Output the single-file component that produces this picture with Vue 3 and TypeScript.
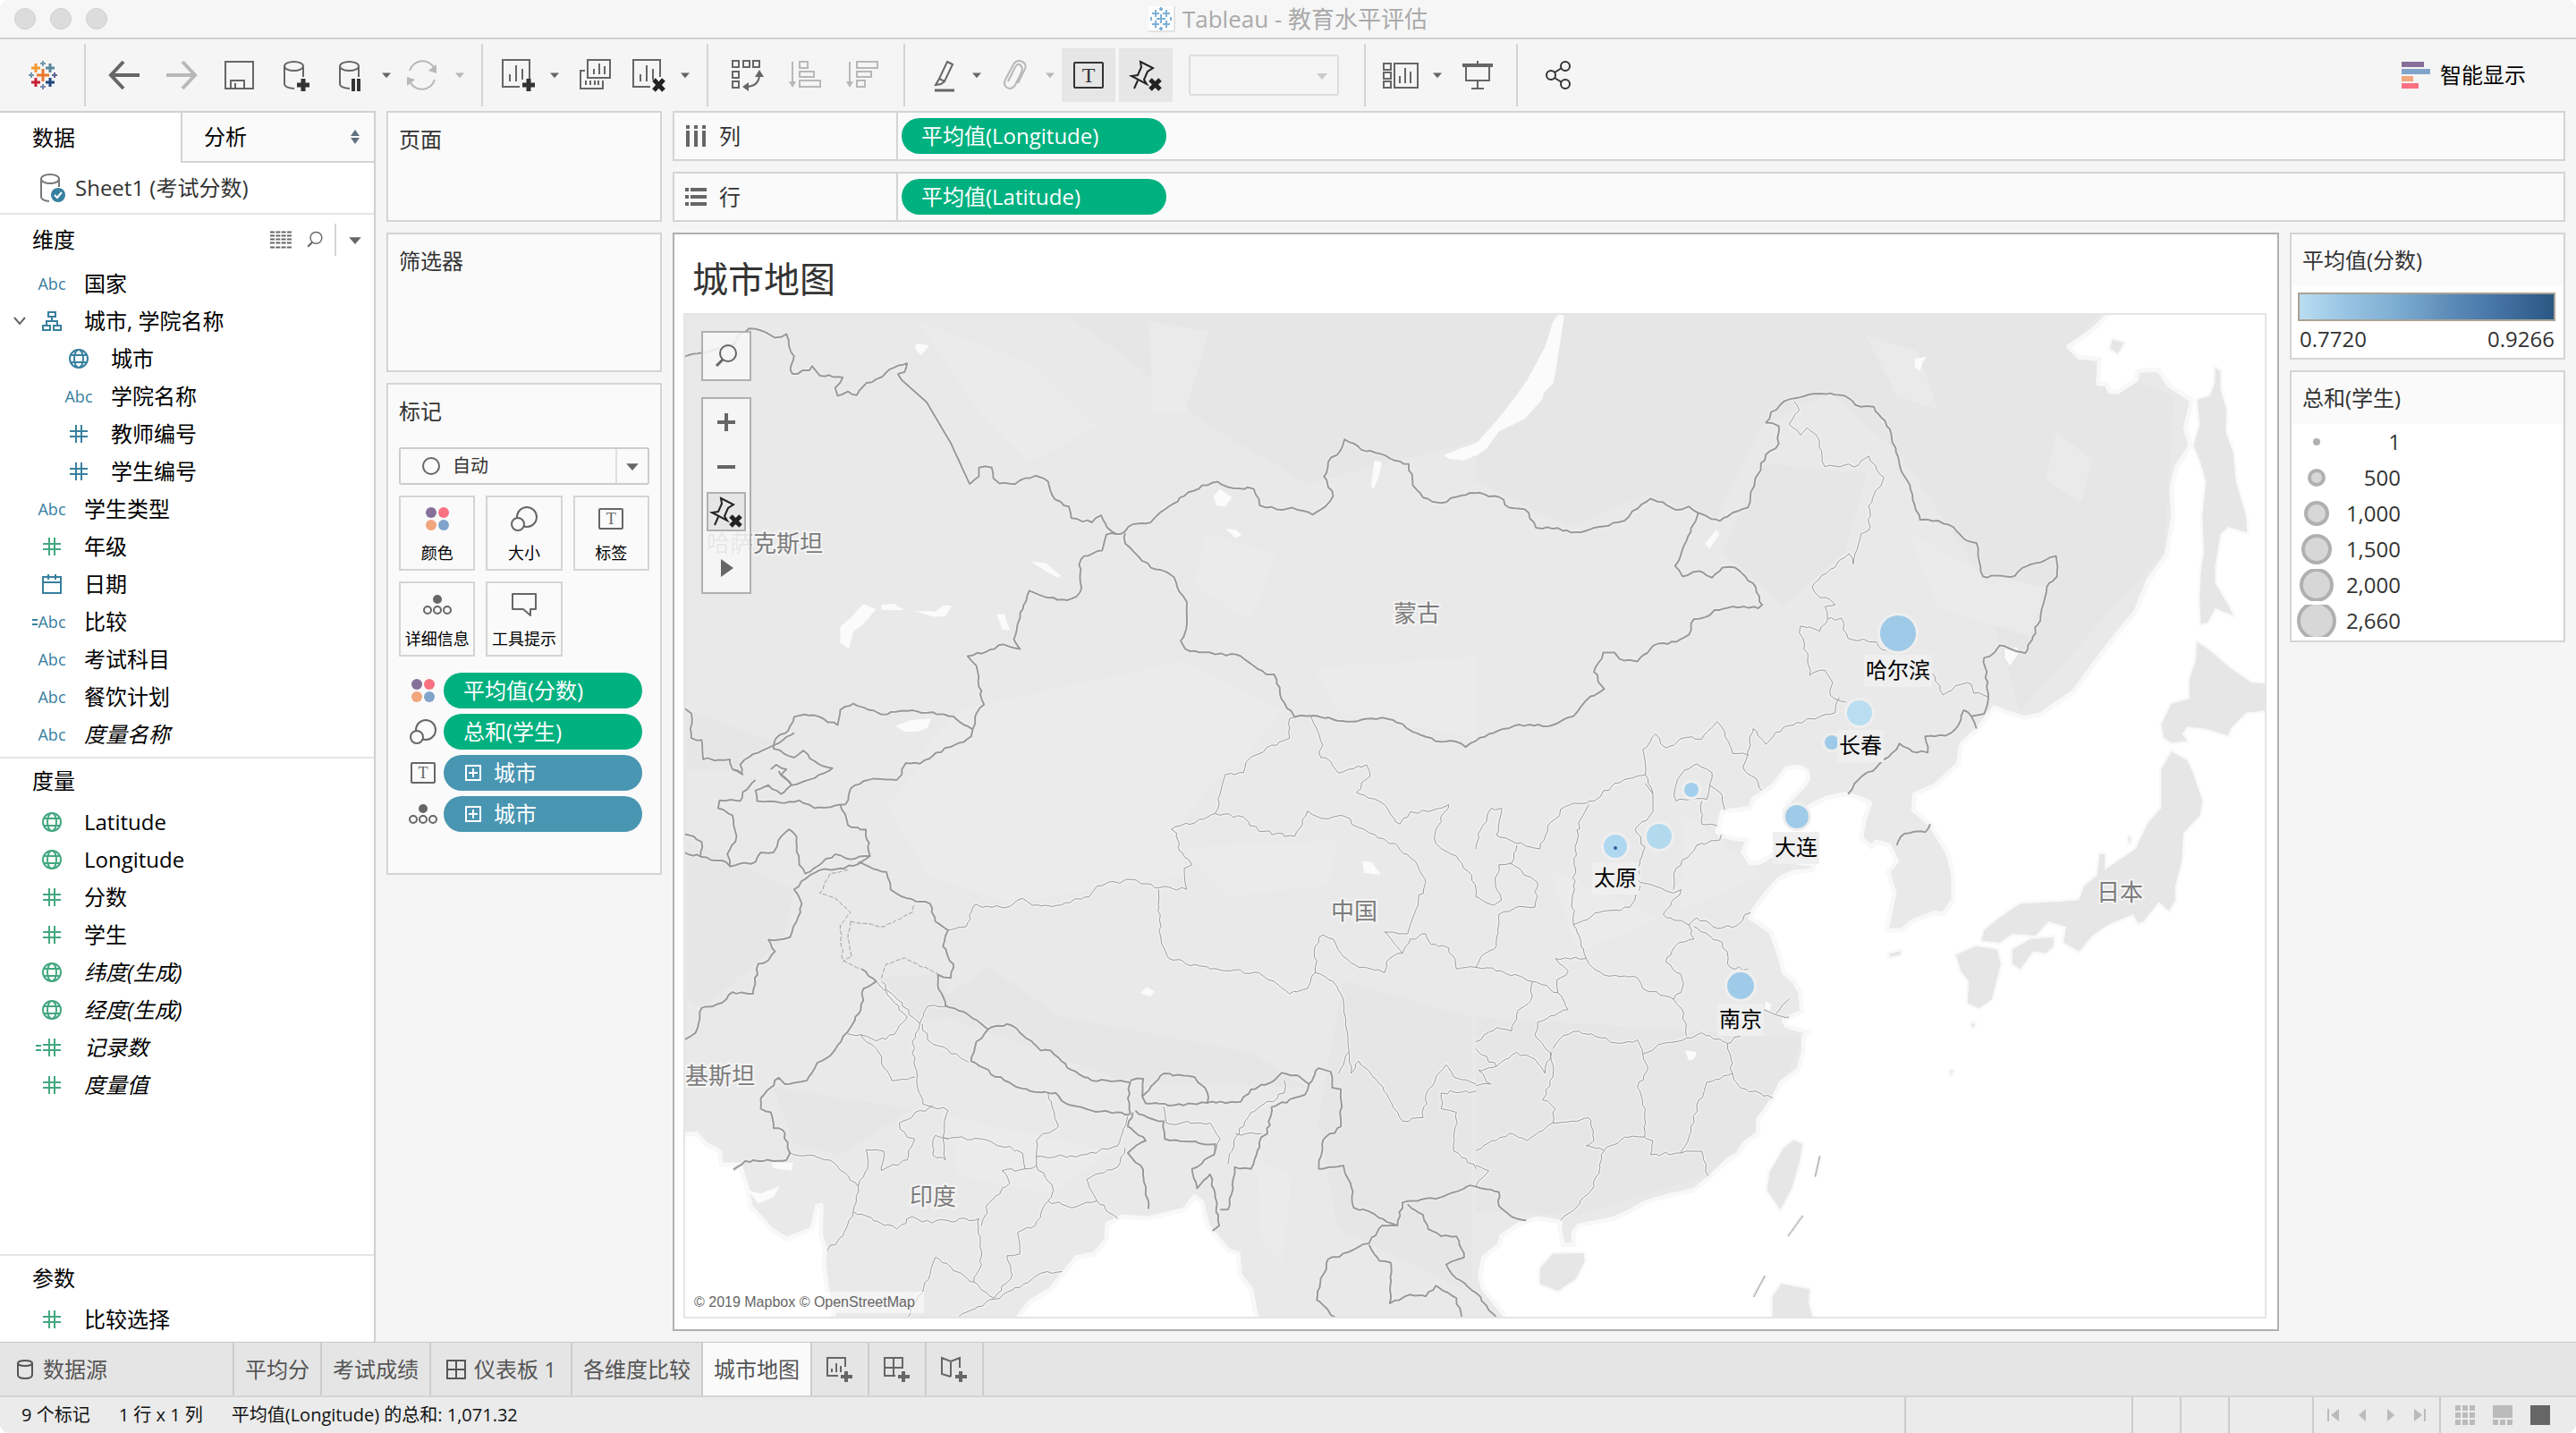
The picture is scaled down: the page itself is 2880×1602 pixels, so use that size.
<script setup lang="ts">
import { ref } from 'vue'

interface Field {
  icon: string
  name: string
  tone?: 'green'
  nested?: boolean
  open?: boolean
  calc?: boolean
  generated?: boolean
}

const dimensions: Field[] = [
  { icon: 'abc', name: '国家' },
  { icon: 'tree', name: '城市, 学院名称', open: true },
  { icon: 'globe', name: '城市', nested: true },
  { icon: 'abc', name: '学院名称', nested: true },
  { icon: 'hash', name: '教师编号', nested: true },
  { icon: 'hash', name: '学生编号', nested: true },
  { icon: 'abc', name: '学生类型' },
  { icon: 'hash', name: '年级', tone: 'green' },
  { icon: 'calendar', name: '日期' },
  { icon: 'abc', name: '比较', calc: true },
  { icon: 'abc', name: '考试科目' },
  { icon: 'abc', name: '餐饮计划' },
  { icon: 'abc', name: '度量名称', generated: true },
]
const measures: Field[] = [
  { icon: 'globe', name: 'Latitude', tone: 'green' },
  { icon: 'globe', name: 'Longitude', tone: 'green' },
  { icon: 'hash', name: '分数', tone: 'green' },
  { icon: 'hash', name: '学生', tone: 'green' },
  { icon: 'globe', name: '纬度(生成)', tone: 'green', generated: true },
  { icon: 'globe', name: '经度(生成)', tone: 'green', generated: true },
  { icon: 'hash', name: '记录数', tone: 'green', calc: true, generated: true },
  { icon: 'hash', name: '度量值', tone: 'green', generated: true },
]
const parameters: Field[] = [{ icon: 'hash', name: '比较选择', tone: 'green' }]
const panes = [
  { title: '维度', cls: 'dims', fields: dimensions },
  { title: '度量', cls: 'meas', fields: measures },
  { title: '参数', cls: 'params', fields: parameters },
]

const markButtons = [
  { icon: 'color', label: '颜色' },
  { icon: 'size', label: '大小' },
  { icon: 'label', label: '标签' },
  { icon: 'detail', label: '详细信息' },
  { icon: 'tooltip', label: '工具提示' },
]
const markPills = [
  { icon: 'color', label: '平均值(分数)', discrete: false },
  { icon: 'size', label: '总和(学生)', discrete: false },
  { icon: 'label', label: '城市', discrete: true },
  { icon: 'detail', label: '城市', discrete: true },
]
const sizes = [
  { label: '1', r: 4 },
  { label: '500', r: 8 },
  { label: '1,000', r: 12 },
  { label: '1,500', r: 15 },
  { label: '2,000', r: 17 },
  { label: '2,660', r: 20 },
]
const sheetTabs = ['平均分', '考试成绩', '仪表板 1', '各维度比较', '城市地图']
const activeSheet = ref('城市地图')
const markType = ref('自动')

/* Map geometry. Points are stored per survey tile (A–D) and projected onto the canvas. */
const tiles: Record<string, [number, number]> = { A: [750, 240], B: [1650, 340], C: [750, 860], D: [1650, 860] }
type Pt = [number, number]

function parse(src: string): Pt[] {
  let tile = tiles.A
  return src.trim().split(/\s+/).map((token) => {
    let t = token
    if (tiles[t[0]]) {
      tile = tiles[t[0]]
      t = t.slice(1)
    }
    const [x, y] = t.split(',').map(Number)
    return [tile[0] + x / 1.742, tile[1] + y / 2.529] as Pt
  })
}

let seed = 7
function noise(): number {
  seed = (seed * 16807) % 2147483647
  return seed / 2147483647 - 0.5
}

function line(src: string, amp: number): string {
  const pts = parse(src)
  const out: string[] = []
  pts.forEach((p, i) => {
    if (i > 0) {
      const q = pts[i - 1]
      const n = Math.floor(Math.hypot(p[0] - q[0], p[1] - q[1]) / 5)
      for (let k = 1; k < n; k++) {
        out.push(`${(q[0] + ((p[0] - q[0]) * k) / n + noise() * amp).toFixed(1)} ${(q[1] + ((p[1] - q[1]) * k) / n + noise() * amp).toFixed(1)}`)
      }
    }
    out.push(`${p[0].toFixed(1)} ${p[1].toFixed(1)}`)
  })
  return 'M' + out.join('L')
}

const area = (src: string) => line(src, 0) + 'Z'

const seas = [
  'B1235,20 1215,55 1195,80 1155,120 1175,150 1215,155 1212,225 1228,225 1235,248 1250,248 1285,215 1290,188 1330,185 1350,230 1395,272 1382,350 1392,400 1365,460 1355,520 1358,600 1345,710 1310,780 1285,870 1250,930 1205,1015 1165,1095 1100,1160 1070,1170 1035,1155 1010,1140 975,1205 945,1245 940,1300 895,1360 855,1385 852,1430 885,1470 D920,240 930,300 930,370 910,410 895,405 850,430 830,455 800,455 815,350 803,290 820,260 805,215 780,205 770,220 750,195 757,140 768,95 745,80 720,70 685,80 650,105 625,150 605,140 600,115 613,85 640,45 B648,1340 645,1320 630,1308 605,1312 580,1360 540,1400 535,1425 480,1435 470,1490 D475,185 500,195 530,200 520,235 535,265 550,265 580,240 620,262 660,270 655,285 620,290 590,310 560,360 540,400 535,420 575,460 590,520 600,575 620,600 632,630 635,685 600,710 605,725 650,745 638,755 638,800 628,850 595,885 575,940 550,990 550,1030 525,1055 510,1090 490,1105 455,1155 425,1190 375,1205 330,1225 300,1250 270,1270 200,1290 190,1310 192,1345 170,1345 163,1300 165,1280 120,1270 85,1285 50,1320 45,1345 15,1380 8,1430 15,1470 35,1505 65,1560 1560,1560 B1560,20',
  'C670,1560 700,1505 740,1470 790,1380 825,1370 848,1330 850,1285 880,1265 930,1270 1000,1245 1020,1208 1035,1225 1045,1290 1085,1360 1105,1370 1108,1430 1130,1470 1142,1560',
  'C10,1035 50,1030 68,1060 95,1080 98,1118 135,1118 140,1145 150,1190 155,1235 195,1300 225,1328 275,1300 285,1235 293,1232 292,1320 300,1350 298,1400 305,1480 320,1560 10,1560',
].map(area)

const islands = [
  'B1440,180 1450,190 1450,240 1462,300 1460,360 1475,420 1480,500 1500,600 1502,645 1465,630 1450,650 1440,740 1440,790 1465,850 1475,880 1440,860 1425,900 1412,905 1410,830 1412,760 1418,700 1415,600 1422,500 1410,440 1398,400 1410,340 1405,270 1430,260 1440,220',
  'B1405,955 1430,980 1470,1030 1510,1070 1560,1075 1560,1145 1500,1155 1470,1200 1465,1220 1420,1200 1385,1195 1375,1215 1385,1235 1355,1240 1340,1225 1335,1190 1355,1130 1390,1115 1390,1060 1402,1010',
  'B1355,1265 1385,1290 D1395,5 1415,90 1410,130 1378,180 1375,260 1362,330 1362,370 1350,400 1330,375 1300,430 1290,435 1280,410 1230,440 1200,470 1175,515 1145,490 1150,445 1115,430 1090,470 1045,465 1020,490 985,485 990,455 1020,420 1060,380 1130,375 1175,370 1185,330 1210,300 1215,240 1225,240 1225,285 1285,225 1310,150 1335,110 1335,0',
  'D1045,510 1080,480 1125,475 1125,500 1110,520 1085,515 1060,565 1045,550',
  'D935,525 975,500 1015,510 1022,550 1005,650 980,675 958,660 960,600 945,570',
  'D620,1048 636,1060 630,1110 615,1185 593,1245 567,1190 572,1140 600,1070',
  'D150,1370 210,1368 212,1390 195,1440 160,1475 125,1455 125,1410',
  'D595,1455 630,1465 650,1470 648,1510 658,1560 578,1560 578,1490',
  'D805,522 828,514 826,524 806,530',
  'D1270,190 1276,195 1274,212',
  'B1240,100 1262,110 1250,140 1235,125',
  'D966,718 972,720 970,728 966,727',
  'D924,853 930,852 925,864',
].map(area)

const lakes = [
  'B165,20 172,35 155,195 150,225 132,250 130,268 95,325 45,360 20,410 0,430 0,395 40,330 65,285 100,215 135,120 150,50',
  'A1505,680 1530,665 1575,642 1575,675 1545,695 1515,690',
  'A477,365 503,370 487,398 477,380', 'A375,1100 400,1115 380,1150 355,1180 347,1228 330,1210 330,1165 350,1140',
  'A410,1103 435,1100 455,1118 410,1118', 'A477,1120 515,1122 530,1105 548,1105 535,1135 510,1137',
  'A635,1130 650,1130 660,1175 645,1172', 'A700,980 730,985 760,1020 755,1027 735,1012',
  'A1070,775 1093,800 1080,825 1062,822 1057,795', 'A1370,695 1385,700 1378,745 1368,778 1364,765',
  'A1080,888 1100,890 1112,905 1100,914', 'A437,1445 465,1430 507,1424 500,1450 480,1462 455,1462',
  'C1347,260 1365,262 1383,298 1350,293', 'C927,616 942,628 935,644 914,632', 'B468,638 475,650 455,692 446,678',
  'B855,155 878,148 870,165 865,190 855,180', 'B1030,975 1055,970 1058,985 1040,1022 1030,1000',
  'D407,795 430,800 425,820 415,823', 'D565,655 575,665 572,685 562,680', 'C150,1190 175,1200 212,1178 200,1210 170,1228',
  'C195,1112 238,1112 236,1135 200,1128',
].map(area)

const reliefDark = [
  'A0,270 760,270 900,420 1050,600 1240,760 1568,640 1568,270', 'B0,0 1230,0 1150,130 1360,260 1340,700 1060,1150 980,760 830,430 690,250 560,340 470,600 330,540 180,630 0,500',
  'C30,200 240,340 220,480 60,680 30,640', 'C500,680 880,880 1240,900 1130,800 760,700 620,560', 'D0,700 640,760 560,1000 450,1150 200,1260 0,1250',
  'C1310,600 1560,700 1560,1480 1300,1300 1260,1000', 'B560,450 760,480 720,700 600,850 480,700', 'C200,900 470,960 330,1090 240,1060',
  'C410,590 520,580 560,690 480,720', 'A30,1400 200,1490 130,1568 30,1568',
].map(area)
const reliefLight = [
  'A480,300 700,420 830,600 700,700 600,560', 'A1040,900 1180,960 1130,1150 1020,1050', 'A560,1400 1000,1260 1190,1400 1100,1568 460,1568',
  'C480,0 1080,0 990,160 1000,300 660,380 500,300 420,100', 'A1250,1280 1568,1250 1568,1480 1300,1410', 'C1000,220 1300,200 1280,330 1080,360',
  'B840,640 980,760 1110,800 1080,940 900,860', 'D400,120 560,300 400,400', 'C540,980 860,1080 740,1200 560,1150', 'D140,280 360,420 200,520',
  'B760,90 860,130 900,300 820,260', 'B1130,360 1200,440 1180,560 1110,500', 'C1140,1100 1210,1150 1190,1400 1150,1330', 'A930,300 1050,330 1000,560 940,560',
].map(area)

const nations = [
  'A26,402 60,390 100,378 125,365 130,345 152,322 185,333 203,348 225,337 230,370 240,400 233,440 237,450 270,440 275,428 290,455 335,460 330,475 320,490 325,512 345,500 362,510 375,485 400,465 420,445 435,432 460,420 455,445 442,450',
  'A582,762 600,740 600,715 625,715 628,745 640,760 670,762 690,745 710,738 735,755 748,805 775,825 780,858 820,870 838,850 850,885 868,903 885,895 900,875 935,870 955,840 1000,795 1035,765 1065,755 1085,770 1135,775 1147,822 1180,833 1210,828 1250,848 1275,825 1290,795 1272,740 1280,700 1305,665 1312,635 1345,665 1380,675 1410,695 1437,705 1445,765 1465,800 1500,815 1530,798 B0,534 45,545 65,575 95,580 117,632 150,635 205,645 240,630 290,612 305,585 340,550 365,560 390,582 415,572 433,590 475,613 500,590 530,575 535,540 550,480 565,425 590,395 590,345 565,335 575,305 600,275 640,260 690,252 725,265 750,290 775,290 797,330 810,380 822,430 828,470 845,510 855,570 865,610 900,612 930,630 955,668 975,675 978,710 988,770 1050,768 1065,745 1100,730 1130,712 1132,770 1112,800 1100,880 1085,940 1070,987 1020,965 1010,985 990,1000 998,1100 990,1158 965,1165 975,1200',
  'B965,1165 950,1148 940,1190 915,1220 875,1222 880,1268 850,1265 825,1242 810,1270 780,1310 745,1345 725,1385',
  'D820,215 828,190 845,180 875,178 885,155',
  'A885,900 885,930 910,965 935,998 965,1010 980,1025 990,1065 1005,1095 1005,1160 993,1205 1002,1228 1060,1243 1100,1243 1135,1275 1160,1300 1175,1300 1195,1380 1215,1420 1245,1417 1290,1427 1335,1433 1385,1422 1425,1440 1445,1462 1500,1490 1530,1490 1548,1505 B0,1235 45,1205 75,1192 150,1190 190,1165 215,1120 250,1088 230,1040 248,985 270,985 280,1003 315,1010 355,960 390,955 415,935 425,890 455,880 465,865 500,855 550,860 558,850 545,800 525,770 505,745 480,745 460,773 435,755 403,770 388,740 398,715 410,670 433,590',
  'A868,903 848,905 840,950 805,965 795,990 800,1055 790,1080 772,1090 735,1083 698,1063 680,1140 668,1200 680,1228 648,1215 615,1235 578,1248 595,1275 600,1335 610,1385 595,1410 588,1455 585,1475 545,1505 510,1530 485,1552 458,1550 450,1568 C450,15 440,30 410,28 385,30 350,55 340,100',
  'A588,1455 550,1418 500,1408 460,1403 410,1413 385,1400 355,1382 330,1400 325,1443 290,1420 260,1413 240,1420 228,1460 205,1480 200,1510 240,1535 258,1515 280,1545 315,1565 C280,25 235,45 215,15 225,0 A205,1555 195,1568',
  'A26,1395 40,1410 40,1480 60,1485 63,1540 115,1540 120,1568 C140,15 120,0', 'A240,1465 200,1500 160,1525 135,1555 C138,15',
  'C340,100 280,110 250,88 215,95 168,90 165,60 190,45 215,70 235,45 210,5', 'C165,30 140,65 135,90 95,88 92,110 120,130 128,190 110,240 115,275 165,262 175,235 200,235 215,190 230,170 245,190 250,270 262,295 320,240 350,255 388,245 380,170 345,158 330,100',
  'C26,235 60,248 100,258 115,275', 'C26,183 60,205 58,248',
  'C388,245 365,268 330,280 290,285 262,310 240,340 255,380 245,430 232,475 190,482 203,515 190,540 170,550 160,635 120,630 100,660 60,675 48,745 26,765',
  'C365,262 385,275 420,290 428,340 450,360 505,380 515,430 540,455 530,500 550,550 545,590 520,580 520,610 535,670 570,685 618,735 635,725 655,720 680,745 720,795 740,795 780,850 820,880 850,880 895,885 890,930 895,975',
  'C618,735 595,770 585,825 650,880 700,910 750,915 770,945 820,965 895,975',
  'C895,880 920,875 918,925 960,860 1020,870 1045,915 1045,943 980,950 925,945 918,925', 'C1045,943 1110,940 1130,905 1175,880 1190,858 1220,865 1243,890 1235,920 1170,955 1162,1030 1150,1040 1130,1130 1098,1125 1095,1185 1085,1245 1070,1245',
  'C1243,890 1262,845 1285,855 1288,900 1305,905 1305,1010 1270,1050 1262,1130 1310,1120 1325,1180 1330,1240 1360,1250 1395,1280 1415,1290 1425,1225 1445,1220 1500,1210 1550,1180 D0,1180 45,1195 45,1235 70,1265 98,1275',
  'C1435,1230 1465,1260 1475,1300 1500,1320 1530,1320 1545,1380 1510,1400 1530,1440 D0,1480 20,1515 40,1550',
  'C1415,1290 1385,1290 1360,1340 1320,1365 1280,1385 1265,1450 1258,1500 1295,1550', 'C1360,1345 1380,1390 1402,1395 1400,1510 1440,1485 1470,1490 1490,1460 1530,1495 1540,1550',
  'C900,970 890,1010 925,1050 890,1085 915,1120 925,1180 930,1243', 'C905,965 930,985 960,995 962,1045 1000,1052 1060,1060 1058,1090 1015,1130 1025,1185 1050,1145 1060,1200 1068,1290 1055,1305',
  'C372,565 400,600 375,620 370,680 343,745 325,780 310,810 285,830 265,880 222,890 210,872 175,930 175,960 195,970 200,1015 218,1020 232,1085 225,1105 145,1108 122,1132',
].map((s) => line(s, 3)).concat(line('A442,450 450,468 498,530 545,645 582,762', 0))

const disputed = ['C345,285 310,295 290,350 320,365 350,405 330,440 335,540 372,565', 'C350,430 415,445 470,405 475,380', 'C410,590 420,550 455,533 520,578', 'C350,430 345,480 352,530 335,545'].map((s) => line(s, 2))

const provinces = [
  'C400,600 430,650 460,700 435,750 400,768 370,750 345,748', 'C410,600 485,718 500,670 540,668', 'C485,718 470,770 480,870 490,945 540,965 530,1040 620,1050 685,1085 690,1130 645,1135 660,1170 620,1225 605,1290',
  'C490,720 500,765 580,828', 'C370,750 400,790 430,880 475,870', 'C510,950 445,1000 460,1040 475,1045 460,1105 410,1135 415,1080 380,1075 383,1130 365,1180 310,1105 232,1085',
  'C365,1180 355,1250 440,1300 470,1265 490,1280 600,1270 605,1400 590,1450 515,1380 490,1480 460,1550', 'C355,1250 335,1320 305,1360', 'C735,915 755,1010 712,1050 712,1095 750,1095 800,1090 870,1065 890,980',
  'C690,1130 712,1120 745,1190 735,1220 780,1240 830,1220 870,1270', 'C735,1220 710,1290 675,1310 680,1370 655,1375 665,1430 630,1495 590,1450', 'C560,1550 630,1498 680,1465 720,1425 762,1420', 'C712,1095 712,1120', 'C885,1070 870,1125 810,1160 830,1220',
  'C540,1045 515,1035 510,1090 535,1105 530,1045', 'C1195,880 1195,915 1130,970 1100,1040 1085,1115', 'C960,955 965,1000 1050,1000 1070,1045 1058,1090', 'C1100,1030 1150,1030',
  'C540,455 575,445 590,385 660,388 685,365 705,385 750,385 815,360 830,330 900,312 950,335 1005,340 1000,280 1015,270 988,220 985,180 975,170 1060,125 1080,15 1115,10 A1120,1550 1135,1530 1170,1500 1205,1480 1205,1425 1215,1420',
  'C1060,125 1115,135 1145,175 1215,190 1240,118 1280,140 1305,130 1360,180 1410,210 1450,260 1470,320 1450,400 1435,465 1390,460 1425,520 1400,535 1390,575 1340,560 1310,530 1290,480 1270,468 1255,500 1255,575 1240,620 1205,635 1175,600 1145,575 1050,565 970,535 955,480 950,340',
  'C1255,575 1290,600 1310,655 1320,790 1325,860 1340,825 1380,890 1425,995 1465,985 1475,905 1510,835 1525,870 1568,890', 'C1320,800 1300,860',
  'A1245,1417 1270,1500 1262,1520 1290,1560 C1300,10 1320,0 A1355,1555 C1362,20 1335,65 1385,95 1420,155 1440,120 1475,120 1515,100 1490,170 1490,210 1520,240 1560,300 1568,360', 'C1425,520 1440,480 1470,465 1480,495 1515,505 1530,565 D0,560',
  'C1568,910 1500,915 1500,960 1530,970 1525,1080 1568,1130', 'D0,560 50,570 110,600 160,632 180,680 120,715 115,750 145,800 150,870 130,935 155,960 150,1000 220,985 230,1050 215,1065 250,1078 290,1040 328,1040 345,1050 340,1090 400,1085 440,1080 453,1150',
  'D0,1078 65,1030 100,1050 150,1000', 'D250,1078 230,1180 195,1240 165,1275', 'D0,1120 25,1135 0,1180', 'D0,770 40,730 70,740 80,690 110,640 110,600', 'D0,790 40,840 80,800 115,820 135,860 148,800', 'D40,840 5,850 30,890 0,895',
  'D150,790 165,760 200,740 280,775 315,765 325,805 335,850 315,900 330,960 328,1040', 'D325,805 365,775 410,760 440,745 490,775 500,860 515,900 545,910 578,930', 'D500,860 450,885 430,950 425,1000 400,1085', 'D490,775 515,755',
  'D410,755 405,690 385,650 325,620 315,590 260,585 220,550 215,535 190,440 190,330 200,150 220,100', 'D385,650 402,620 400,580 370,545 395,490 425,480 415,440 365,410 400,340 385,350 320,320 315,280 330,220 310,170 345,120 345,70 330,40',
  'D330,15 270,40 230,90 175,105 140,160 125,225 80,210 40,185 50,110 30,110 10,170 0,225', 'D190,440 240,405 300,390 320,330', 'D425,445 480,490 495,560 530,565', 'D415,440 430,420 470,450 510,440 535,405', 'D385,340 390,280 430,215 475,200 478,185',
  'D215,535 155,535 180,570 158,595 160,632', 'D65,265 120,320 115,390 85,388 45,410 40,500 10,530 0,560', 'D80,215 70,265 45,270 38,320 50,370 35,385 0,360', 'D560,680 580,692 610,700', 'D585,690 610,650',
  'B430,1300 460,1325 455,1365 450,1400 390,1405 388,1370 400,1330 430,1300', 'B455,1360 475,1380 485,1430', 'B440,1405 440,1470 470,1475', 'B345,1385 330,1330 325,1260 350,1215 370,1255 410,1225 440,1230 470,1180 485,1210 500,1270 530,1275 520,1310 545,1340 557,1375',
  'B530,1275 540,1200 565,1245 600,1195 700,1155 708,1112', 'B720,1125 690,1105 695,1070 680,1035 650,1050 640,960 630,930 632,910 670,925 685,890 712,888 725,945 780,955 800,980',
  'B685,890 680,855 700,850 690,835 670,830 655,800 690,750 727,705 735,735 750,650 765,640 765,570 795,490 765,430 745,455 680,460 665,375 645,350 632,370 610,340 630,300 620,275', 'B890,1045 910,1105 945,1075 965,1075 970,1100 997,1110',
].map((s) => line(s, 4)).concat(['D670,1093 661,1152', 'D637,1262 608,1320', 'D563,1432 541,1492'].map((s) => line(s, 0)))

const countries = [
  { name: '哈萨克斯坦', x: 790, y: 617 },
  { name: '蒙古', x: 1558, y: 695 },
  { name: '中国', x: 1488, y: 1028 },
  { name: '印度', x: 1017, y: 1347 },
  { name: '基斯坦', x: 766, y: 1212 },
  { name: '日本', x: 2344, y: 1007 },
]
const marks = [
  { x: 2122, y: 708, r: 20, fill: '#9fcae7' },
  { x: 2079, y: 797, r: 14, fill: '#b9ddf1' },
  { x: 2048, y: 830, r: 8, fill: '#9dcae8' },
  { x: 1891, y: 883, r: 8, fill: '#a2cfec' },
  { x: 1855, y: 935, r: 14, fill: '#b3d9ef' },
  { x: 1806, y: 946, r: 13, fill: '#afd7f0' },
  { x: 1806, y: 948, r: 2, fill: '#2f5f95' },
  { x: 2009, y: 913, r: 13, fill: '#9fcbe8' },
  { x: 1946, y: 1102, r: 15, fill: '#9fcbe8' },
]
const cities = [
  { name: '哈尔滨', x: 2122, y: 750, w: 76 },
  { name: '长春', x: 2080, y: 834, w: 52 },
  { name: '大连', x: 2008, y: 948, w: 52 },
  { name: '太原', x: 1806, y: 982, w: 52 },
  { name: '南京', x: 1946, y: 1140, w: 52 },
]
</script>

<template>
  <svg class="defs" aria-hidden="true">
    <symbol id="i-logo" viewBox="0 0 40 40">
      <g fill="none" stroke-width="3">
        <path d="M20 13v14M13 20h14" stroke="#eb762a" />
        <path d="M12 7v10M7 12h10" stroke="#f2992e" /><path d="M28 7v10M23 12h10" stroke="#59879b" />
        <path d="M12 23v10M7 28h10" stroke="#c72035" /><path d="M28 23v10M23 28h10" stroke="#1f457e" />
        <path d="M20 4v6M17 7h6" stroke="#7199a6" stroke-width="2" /><path d="M20 30v6M17 33h6" stroke="#7b88b0" stroke-width="2" />
        <path d="M7 17v6M4 20h6" stroke="#7199a6" stroke-width="2" /><path d="M33 17v6M30 20h6" stroke="#5b6591" stroke-width="2" />
      </g>
    </symbol>
    <symbol id="i-applogo" viewBox="0 0 30 30">
      <path d="M0 1h29v28H0z" fill="#fdfdfd" /><path d="M29 1v28H0" fill="none" stroke="#ccc" />
      <g stroke="#7db0d5" stroke-width="2" fill="none"><path d="M14 10v10M9 15h10M8 5v8M4 9h8M20 5v8M16 9h8M8 17v8M4 21h8M20 17v8M16 21h8M14 2v4M12 4h4M14 24v4M12 26h4M3 13v4M25 13v4" /></g>
    </symbol>
    <symbol id="i-back" viewBox="0 0 40 40"><path d="M37 20H5M19 5L5 20l14 15" fill="none" stroke="currentColor" stroke-width="4" /></symbol>
    <symbol id="i-forward" viewBox="0 0 40 40"><path d="M3 20h32M21 5l14 15-14 15" fill="none" stroke="currentColor" stroke-width="4" /></symbol>
    <symbol id="i-save" viewBox="0 0 40 40"><path d="M5 5h31v30H5zM11 35V26h15v9M16 35v-6" fill="none" stroke="currentColor" stroke-width="2" /></symbol>
    <symbol id="i-dbadd" viewBox="0 0 40 40">
      <path d="M7 10v20q0 4 11 5M28 10v12" fill="none" stroke="currentColor" stroke-width="2" /><ellipse cx="17.500" cy="10" rx="10.500" ry="5" fill="none" stroke="currentColor" stroke-width="2" />
      <path d="M28 24v14M21 31h14" stroke="#333" stroke-width="5" />
    </symbol>
    <symbol id="i-dbpause" viewBox="0 0 40 40">
      <path d="M9 10v20q0 4 11 5M30 10v12" fill="none" stroke="currentColor" stroke-width="2" /><ellipse cx="19.500" cy="10" rx="10.500" ry="5" fill="none" stroke="currentColor" stroke-width="2" />
      <path d="M24 24v14M30 24v14" stroke="#333" stroke-width="4" />
    </symbol>
    <symbol id="i-refresh" viewBox="0 0 40 40">
      <path d="M5 15a15 15 0 0 1 28-2M33 25a15 15 0 0 1-28 2" fill="none" stroke="currentColor" stroke-width="2" /><path d="M35 8v10l-9-3zM2 32V22l9 3z" fill="currentColor" />
    </symbol>
    <symbol id="i-newsheet" viewBox="0 0 40 40">
      <path d="M22 33H3V3h30v21" fill="none" stroke="currentColor" stroke-width="2" /><path d="M11 19v8M18 9v18M25 13v12" stroke="currentColor" stroke-width="2" />
      <path d="M32 24v14M25 31h14" stroke="#333" stroke-width="5" />
    </symbol>
    <symbol id="i-dupsheet" viewBox="0 0 40 40">
      <path d="M12 3h25v20H12zM9 15H4v20h25V26" fill="none" stroke="currentColor" stroke-width="2" /><path d="M19 13v6M25 7v12M31 10v9M10 26v5M15 26v5M20 26v5M24 26v5" stroke="currentColor" stroke-width="2" />
    </symbol>
    <symbol id="i-clearsheet" viewBox="0 0 40 40">
      <path d="M22 33H3V3h30v19" fill="none" stroke="currentColor" stroke-width="2" /><path d="M11 19v8M18 9v18M25 13v12" stroke="currentColor" stroke-width="2" />
      <path d="M26 25l11 12M37 25L26 37" stroke="#222" stroke-width="5" />
    </symbol>
    <symbol id="i-swap" viewBox="0 0 40 40">
      <path d="M4 4h7v7H4zM16 4h7v7h-7zM27 4h7v7h-7zM4 16h7v7H4zM4 27h7v7H4z" fill="none" stroke="currentColor" stroke-width="2" />
      <path d="M34 19q0 13-14 14" fill="none" stroke="currentColor" stroke-width="2" /><path d="M29 22l5-8 5 8zM22 28v10l-7-5z" fill="currentColor" />
    </symbol>
    <symbol id="i-sortasc" viewBox="0 0 40 40"><path d="M7 5v25M15 5h9v7h-9zM15 16h16v6H15zM15 26h23v7H15z" fill="none" stroke="currentColor" stroke-width="2" /><path d="M3 27h8l-4 7z" fill="currentColor" /></symbol>
    <symbol id="i-sortdesc" viewBox="0 0 40 40"><path d="M7 5v25M15 5h23v7H15zM15 16h16v6H15zM15 26h9v7h-9z" fill="none" stroke="currentColor" stroke-width="2" /><path d="M3 27h8l-4 7z" fill="currentColor" /></symbol>
    <symbol id="i-highlight" viewBox="0 0 40 40"><path d="M28 5l6 3-9 19-6-3zM19 24l-4 7 6-1 4-3" fill="none" stroke="currentColor" stroke-width="2" /><path d="M14 37h22" stroke="currentColor" stroke-width="3" /></symbol>
    <symbol id="i-clip" viewBox="0 0 40 40"><path d="M14 27l8-16q3-5 6-2t1 8l-7 14q-4 6-9 3t-2-9l9-17q4-6 10-3t2 10l-7 14" fill="none" stroke="currentColor" stroke-width="2" /></symbol>
    <symbol id="i-pin" viewBox="0 0 40 40">
      <path d="M14 5l14 7-6 4-4 9 3 5-17-9 7-1 4-9zM11 26L7 35" fill="none" stroke="currentColor" stroke-width="2" /><path d="M25 25l11 11M36 25L25 36" stroke="currentColor" stroke-width="5" />
    </symbol>
    <symbol id="i-cards" viewBox="0 0 44 40"><path d="M3 7h8v7H3zM3 17h8v7H3zM3 27h8v7H3zM15 7h26v27H15zM21 21v8M27 12v17M33 16v13" fill="none" stroke="currentColor" stroke-width="2" /></symbol>
    <symbol id="i-present" viewBox="0 0 40 40"><path d="M3 9h34" stroke="currentColor" stroke-width="4" /><path d="M20 4v4M7 9v17h26V9M20 26v9M13 35h14" fill="none" stroke="currentColor" stroke-width="2" /></symbol>
    <symbol id="i-share" viewBox="0 0 40 40"><g fill="none" stroke="currentColor" stroke-width="2"><circle cx="11" cy="20" r="5" /><circle cx="27" cy="10" r="5" /><circle cx="27" cy="30" r="5" /><path d="M15 17l8-5M15 23l8 5" /></g></symbol>
    <symbol id="i-caret" viewBox="0 0 12 8"><path d="M0 1h12L6 8z" fill="currentColor" /></symbol>
    <symbol id="i-search" viewBox="0 0 28 28"><circle cx="16" cy="11" r="9" fill="none" stroke="currentColor" stroke-width="2" /><path d="M10 18L3 25" stroke="currentColor" stroke-width="3" /></symbol>
    <symbol id="i-globe" viewBox="0 0 24 24"><g fill="none" stroke="currentColor" stroke-width="2"><circle cx="12" cy="12" r="10" /><ellipse cx="12" cy="12" rx="5" ry="10" /><path d="M3 8h18M3 16h18" /></g></symbol>
    <symbol id="i-hash" viewBox="0 0 24 24"><path d="M9 2v20M15 2v20M2 9h20M2 15h20" fill="none" stroke="currentColor" stroke-width="2" /></symbol>
    <symbol id="i-tree" viewBox="0 0 24 24"><path d="M8 2h8v5H8zM2 17h8v5H2zM14 17h8v5h-8zM12 7v5M6 17v-5h12v5" fill="none" stroke="currentColor" stroke-width="2" /></symbol>
    <symbol id="i-calendar" viewBox="0 0 24 24"><path d="M2 4h20v18H2zM2 10h20M8 1v6M16 1v6" fill="none" stroke="currentColor" stroke-width="2" /></symbol>
    <symbol id="i-color" viewBox="0 0 34 28"><circle cx="10" cy="7" r="6" fill="#86709a" /><circle cx="24" cy="7" r="6" fill="#fa7182" /><circle cx="10" cy="21" r="6" fill="#f1a67c" /><circle cx="24" cy="21" r="6" fill="#81a4cb" /></symbol>
    <symbol id="i-size" viewBox="0 0 34 28"><circle cx="20" cy="12" r="11" fill="none" stroke="currentColor" stroke-width="2" /><circle cx="10" cy="20" r="7" fill="#fafafa" stroke="currentColor" stroke-width="2" /></symbol>
    <symbol id="i-detail" viewBox="0 0 34 28"><circle cx="17" cy="8" r="5" fill="currentColor" /><g fill="none" stroke="currentColor" stroke-width="2"><circle cx="6" cy="20" r="4" /><circle cx="17" cy="20" r="4" /><circle cx="28" cy="20" r="4" /></g></symbol>
    <symbol id="i-tooltip" viewBox="0 0 34 28"><path d="M4 2h26v17h-6v7l-8-7H4z" fill="none" stroke="currentColor" stroke-width="2" stroke-linejoin="round" /></symbol>
    <symbol id="i-db" viewBox="0 0 20 24"><path d="M2 5v13q0 4 8 4t8-4V5" fill="none" stroke="currentColor" stroke-width="2" /><ellipse cx="10" cy="5" rx="8" ry="3" fill="none" stroke="currentColor" stroke-width="2" /></symbol>
    <symbol id="i-dash" viewBox="0 0 24 24"><path d="M2 2h20v20H2zM12 2v20M2 12h20" fill="none" stroke="currentColor" stroke-width="2" /></symbol>
    <symbol id="i-addsheet" viewBox="0 0 32 32"><path d="M14 23H2V3h20v10M7 15v4M12 9v10M17 12v7" fill="none" stroke="currentColor" stroke-width="2" /><path d="M23 18v12M17 24h13" stroke="currentColor" stroke-width="4" /></symbol>
    <symbol id="i-adddash" viewBox="0 0 32 32"><path d="M14 23H2V3h20v11H2M12 3v20" fill="none" stroke="currentColor" stroke-width="2" /><path d="M23 18v12M17 24h13" stroke="currentColor" stroke-width="4" /></symbol>
    <symbol id="i-addstory" viewBox="0 0 32 32"><path d="M12 24L2 21V3l10 4 10-4v11M12 7v17" fill="none" stroke="currentColor" stroke-width="2" /><path d="M23 18v12M17 24h13" stroke="currentColor" stroke-width="4" /></symbol>
  </svg>

  <div class="app">
    <header class="titlebar">
      <div class="lights"><i></i><i></i><i></i></div>
      <h1><svg class="applogo"><use href="#i-applogo" /></svg>Tableau - 教育水平评估</h1>
    </header>

    <nav class="toolbar" aria-label="工具栏">
      <div class="group first"><button class="tool" aria-label="起始页"><svg><use href="#i-logo" /></svg></button></div>
      <div class="group">
        <button class="tool" aria-label="后退"><svg><use href="#i-back" /></svg></button>
        <button class="tool off" aria-label="前进"><svg><use href="#i-forward" /></svg></button>
        <button class="tool" aria-label="保存"><svg><use href="#i-save" /></svg></button>
        <button class="tool" aria-label="新建数据源"><svg><use href="#i-dbadd" /></svg></button>
        <button class="tool split" aria-label="暂停自动更新"><svg><use href="#i-dbpause" /></svg></button>
        <button class="drop" aria-label="更新选项"><svg><use href="#i-caret" /></svg></button>
        <button class="tool split off" aria-label="运行更新"><svg><use href="#i-refresh" /></svg></button>
        <button class="drop off" aria-label="运行选项"><svg><use href="#i-caret" /></svg></button>
      </div>
      <div class="group">
        <button class="tool split" aria-label="新建工作表"><svg><use href="#i-newsheet" /></svg></button>
        <button class="drop" aria-label="新建选项"><svg><use href="#i-caret" /></svg></button>
        <button class="tool" aria-label="复制工作表"><svg><use href="#i-dupsheet" /></svg></button>
        <button class="tool split" aria-label="清除工作表"><svg><use href="#i-clearsheet" /></svg></button>
        <button class="drop" aria-label="清除选项"><svg><use href="#i-caret" /></svg></button>
      </div>
      <div class="group arrange">
        <button class="tool" aria-label="交换行和列"><svg><use href="#i-swap" /></svg></button>
        <button class="tool off" aria-label="升序"><svg><use href="#i-sortasc" /></svg></button>
        <button class="tool off" aria-label="降序"><svg><use href="#i-sortdesc" /></svg></button>
      </div>
      <div class="group format">
        <button class="tool split" aria-label="突出显示"><svg><use href="#i-highlight" /></svg></button>
        <button class="drop" aria-label="突出显示选项"><svg><use href="#i-caret" /></svg></button>
        <button class="tool split off" aria-label="组"><svg><use href="#i-clip" /></svg></button>
        <button class="drop off" aria-label="组选项"><svg><use href="#i-caret" /></svg></button>
        <button class="tool toggled" aria-label="显示标记标签"><span class="tbox big">T</span></button>
        <button class="tool toggled" aria-label="固定轴"><svg><use href="#i-pin" /></svg></button>
        <div class="fit"><select aria-label="适合" disabled></select><svg><use href="#i-caret" /></svg></div>
      </div>
      <div class="group">
        <button class="tool split" aria-label="显示卡"><svg class="wide"><use href="#i-cards" /></svg></button>
        <button class="drop" aria-label="显示卡选项"><svg><use href="#i-caret" /></svg></button>
        <button class="tool" aria-label="演示模式"><svg><use href="#i-present" /></svg></button>
      </div>
      <div class="group last"><button class="tool dark" aria-label="共享"><svg><use href="#i-share" /></svg></button></div>
      <button class="showme">
        <svg viewBox="0 0 32 30"><path d="M0 0h25v6H0z" fill="#86709a" /><path d="M0 8h32v6H0z" fill="#81a4cb" /><path d="M0 16h13v6H0z" fill="#f1a67c" /><path d="M0 24h19v6H0z" fill="#fa7182" /></svg>智能显示
      </button>
    </nav>

    <main class="work">
      <aside class="data">
        <div class="datatabs" role="tablist">
          <button role="tab" aria-selected="true" class="on">数据</button>
          <button role="tab" aria-selected="false">分析<svg viewBox="0 0 10 16"><path d="M0 7l5-7 5 7zM0 9h10l-5 7z" fill="#60717f" /></svg></button>
        </div>
        <div class="source">
          <svg viewBox="0 0 30 32"><path d="M2 6v20q0 4 9 5M22 6v9" fill="none" stroke="#777" stroke-width="2" /><ellipse cx="12" cy="6" rx="10" ry="5" fill="none" stroke="#777" stroke-width="2" /><circle cx="21" cy="24" r="8" fill="#38809f" /><path d="M17 24l3 3 5-6" fill="none" stroke="#fff" stroke-width="2" /></svg>
          Sheet1 (考试分数)
        </div>
        <section v-for="p in panes" :key="p.title" :class="['pane', p.cls]">
          <div class="panehead">
            <h2>{{ p.title }}</h2>
            <div v-if="p.cls === 'dims'" class="panetools">
              <button aria-label="查看数据"><svg class="listicon" viewBox="0 0 24 19"><path d="M0 1h24M0 5h24M0 9h24M0 13h24M0 18h24" stroke="#666" stroke-width="2" stroke-dasharray="5 1.300" /></svg></button>
              <button aria-label="查找字段"><svg class="findicon"><use href="#i-search" /></svg></button>
              <button aria-label="菜单" class="panemenu"><svg class="menuicon"><use href="#i-caret" /></svg></button>
            </div>
          </div>
          <ul>
            <li v-for="f in p.fields" :key="f.name" :class="{ nested: f.nested, generated: f.generated }">
              <svg v-if="f.open" class="chev" viewBox="0 0 14 10"><path d="M1 1l6 7 6-7" fill="none" stroke="#666" stroke-width="2" /></svg>
              <span :class="['ficon', f.tone]"><i v-if="f.calc" class="eq"></i><span v-if="f.icon === 'abc'">Abc</span><svg v-else><use :href="'#i-' + f.icon" /></svg></span>
              <span>{{ f.name }}</span>
            </li>
          </ul>
        </section>
      </aside>

      <div class="cards">
        <section class="card pages"><h2>页面</h2></section>
        <section class="card filters"><h2>筛选器</h2></section>
        <section class="card marks">
          <h2>标记</h2>
          <div class="marktype">
            <select v-model="markType" aria-label="标记类型"><option>自动</option></select>
            <svg class="ring" viewBox="0 0 20 20"><circle cx="10" cy="10" r="9" fill="none" stroke="#666" stroke-width="2" /></svg>
            <span class="arrow"><svg><use href="#i-caret" /></svg></span>
          </div>
          <div class="markbtns">
            <button v-for="b in markButtons" :key="b.label"><span v-if="b.icon === 'label'" class="tbox">T</span><svg v-else><use :href="'#i-' + b.icon" /></svg>{{ b.label }}</button>
          </div>
          <div v-for="(m, i) in markPills" :key="i" class="markrow">
            <span class="slot"><span v-if="m.icon === 'label'" class="tbox">T</span><svg v-else><use :href="'#i-' + m.icon" /></svg></span>
            <button :class="['pill', { discrete: m.discrete }]"><svg v-if="m.discrete" viewBox="0 0 18 18"><path d="M1 1h16v16H1zM9 4v10M4 9h10" fill="none" stroke="#fff" stroke-width="2" /></svg>{{ m.label }}</button>
          </div>
        </section>
      </div>

      <div class="stage">
        <section class="shelf">
          <h2><svg viewBox="0 0 24 24"><path d="M3 0v4M12 0v4M21 0v4M3 6v18M12 6v18M21 6v18" stroke="#666" stroke-width="4" /></svg>列</h2>
          <button class="pill">平均值(Longitude)</button>
        </section>
        <section class="shelf">
          <h2><svg viewBox="0 0 24 24"><path d="M0 4h4M6 4h18M0 12h4M6 12h18M0 20h4M6 20h18" stroke="#666" stroke-width="4" /></svg>行</h2>
          <button class="pill">平均值(Latitude)</button>
        </section>
        <div class="lower">
          <section class="view">
            <h2>城市地图</h2>
            <div class="map">
              <svg class="canvas" viewBox="766 352 1766 1120" preserveAspectRatio="xMidYMid slice">
                <rect x="700" y="300" width="1900" height="1200" fill="#e9e9e9" />
                <path v-for="(d, i) in reliefDark" :key="'rd' + i" :d="d" fill="#e4e4e4" opacity=".6" />
                <path v-for="(d, i) in reliefLight" :key="'rl' + i" :d="d" fill="#ededed" opacity=".5" />
                <g fill="#fff" stroke="#f8f8f8" stroke-width="5" stroke-linejoin="round"><path v-for="(d, i) in seas" :key="'s' + i" :d="d" /></g>
                <g fill="#fbfbfb"><path v-for="(d, i) in lakes" :key="'l' + i" :d="d" /></g>
                <g fill="#e6e6e6" stroke="#f9f9f9" stroke-width="5" stroke-linejoin="round" paint-order="stroke"><path v-for="(d, i) in islands" :key="'i' + i" :d="d" /></g>
                <g fill="none" stroke-linejoin="round">
                  <g stroke="#f0f0f0" stroke-width="4"><path v-for="(d, i) in provinces" :key="'ph' + i" :d="d" /><path v-for="(d, i) in nations" :key="'nh' + i" :d="d" /></g>
                  <g stroke="#9c9c9c" stroke-width="1"><path v-for="(d, i) in provinces" :key="'p' + i" :d="d" /></g>
                  <g stroke="#a0a0a0" stroke-width="1" stroke-dasharray="5 2"><path v-for="(d, i) in disputed" :key="'d' + i" :d="d" /></g>
                  <g stroke="#999" stroke-width="2"><path v-for="(d, i) in nations" :key="'n' + i" :d="d" /></g>
                </g>
                <text v-for="c in countries" :key="c.name" class="country" :x="c.x" :y="c.y">{{ c.name }}</text>
                <circle v-for="(m, i) in marks.filter((k) => k.r > 2)" :key="'h' + i" :cx="m.x" :cy="m.y" :r="m.r + 3" fill="#efefef" />
                <circle v-for="(m, i) in marks" :key="'m' + i" :cx="m.x" :cy="m.y" :r="m.r" :fill="m.fill" />
                <g v-for="c in cities" :key="c.name">
                  <rect :x="c.x - c.w / 2" :y="c.y - 18" :width="c.w" height="36" fill="#efefef" />
                  <text class="city" :x="c.x" :y="c.y + 8">{{ c.name }}</text>
                </g>
              </svg>
              <div class="controls">
                <button class="box" aria-label="搜索"><svg class="find"><use href="#i-search" /></svg></button>
                <div class="box zoomer">
                  <button aria-label="放大"><svg viewBox="0 0 20 20"><path d="M10 0v20M0 10h20" stroke="#666" stroke-width="4" /></svg></button>
                  <button aria-label="缩小"><svg viewBox="0 0 20 20"><path d="M0 10h20" stroke="#666" stroke-width="4" /></svg></button>
                  <button class="pinned" aria-label="重置地图"><svg><use href="#i-pin" /></svg></button>
                  <button class="more" aria-label="更多工具"><svg viewBox="0 0 20 20"><path d="M4 0l14 10L4 20z" fill="#666" /></svg></button>
                </div>
              </div>
              <p class="credit">© 2019 Mapbox © OpenStreetMap</p>
            </div>
          </section>
          <aside class="legends">
            <section class="legend">
              <h2>平均值(分数)</h2>
              <div class="ramp"></div>
              <div class="range"><span>0.7720</span><span>0.9266</span></div>
            </section>
            <section class="legend">
              <h2>总和(学生)</h2>
              <ul>
                <li v-for="s in sizes" :key="s.label">
                  <svg viewBox="0 0 44 36"><circle cx="22" cy="18" :r="s.r" :fill="s.r > 4 ? '#d7d7d7' : '#b0b0b0'" :stroke="s.r > 4 ? '#b0b0b0' : 'none'" stroke-width="4" /></svg><span>{{ s.label }}</span>
                </li>
              </ul>
            </section>
          </aside>
        </div>
      </div>
    </main>

    <nav class="sheets" aria-label="工作表">
      <button class="src"><svg class="dbi"><use href="#i-db" /></svg>数据源</button>
      <button v-for="t in sheetTabs" :key="t" :class="{ on: t === activeSheet, dash: t === '仪表板 1' }" @click="activeSheet = t"><svg v-if="t === '仪表板 1'"><use href="#i-dash" /></svg>{{ t }}</button>
      <button class="add" aria-label="新建工作表"><svg><use href="#i-addsheet" /></svg></button>
      <button class="add" aria-label="新建仪表板"><svg><use href="#i-adddash" /></svg></button>
      <button class="add" aria-label="新建故事"><svg><use href="#i-addstory" /></svg></button>
    </nav>

    <footer class="status">
      <span class="st1">9 个标记</span><span class="st2">1 行 x 1 列</span><span>平均值(Longitude) 的总和: 1,071.32</span>
      <div class="cell c1"></div><div class="cell c2"></div><div class="cell c2"></div><div class="cell c3"></div>
      <div class="cell nav">
        <button aria-label="第一个"><svg viewBox="0 0 14 14"><path d="M0 0h2v14H0zM13 0v14L4 7z" fill="#bbb" /></svg></button>
        <button aria-label="上一个"><svg viewBox="0 0 14 14"><path d="M11 0v14L3 7z" fill="#bbb" /></svg></button>
        <button aria-label="下一个"><svg viewBox="0 0 14 14"><path d="M3 0v14l8-7z" fill="#bbb" /></svg></button>
        <button aria-label="最后一个"><svg viewBox="0 0 14 14"><path d="M12 0h2v14h-2zM1 0v14l9-7z" fill="#bbb" /></svg></button>
      </div>
      <div class="cell modes">
        <button aria-label="工作表排序程序"><svg viewBox="0 0 22 22"><path d="M0 0h6v6H0zM8 0h6v6H8zM16 0h6v6h-6zM0 8h6v6H0zM8 8h6v6H8zM16 8h6v6h-6zM0 16h6v6H0zM8 16h6v6H8zM16 16h6v6h-6z" fill="#bbb" /></svg></button>
        <button aria-label="幻灯片"><svg viewBox="0 0 22 22"><path d="M0 0h22v14H0zM0 16h6v6H0zM8 16h6v6H8zM16 16h6v6h-6z" fill="#bbb" /></svg></button>
        <button aria-label="标签视图"><svg viewBox="0 0 22 22"><path d="M0 0h22v22H0z" fill="#666" /></svg></button>
      </div>
    </footer>
  </div>
</template>

<style>
body { background: #fff; }
</style>

<style scoped>
* { box-sizing: border-box; }
.defs { position: absolute; width: 0; height: 0; }
.app {
  display: flex; flex-direction: column; height: 100vh; min-height: 1500px;
  background: #f5f5f5; border-radius: 10px; overflow: hidden; color: #333;
  font: 24px/32px "Open Sans", "Noto Sans CJK SC", sans-serif;
}
button { font: inherit; color: inherit; border: 0; background: none; padding: 0; margin: 0; display: flex; align-items: center; justify-content: center; }
h1, h2, p, ul { margin: 0; padding: 0; font-weight: 400; font-size: 24px; }
ul { list-style: none; }
svg { display: block; flex: none; }

.titlebar { height: 44px; border-bottom: 2px solid #d0d0d0; display: grid; grid-template-columns: 1fr auto 1fr; align-items: center; background: #f6f6f6; flex: none; }
.lights { display: flex; gap: 16px; padding-left: 16px; }
.lights i { width: 24px; height: 24px; border-radius: 50%; background: #dcdcdc; border: 1px solid #cfcfcf; }
h1 { display: flex; align-items: center; gap: 8px; font-size: 26px; color: #aaa; }
.applogo { width: 30px; height: 30px; }

.toolbar { display: flex; align-items: center; height: 80px; flex: none; color: #666; padding-right: 56px; }
.group { display: flex; align-items: center; height: 70px; padding: 0 11px; border-right: 2px solid #d4d4d4; }
.group.first { width: 96px; padding: 0 0 0 16px; }
.group.arrange { padding-right: 15px; }
.group.format { padding-right: 28px; }
.group.last { border: 0; padding-left: 14px; }
.tool { width: 64px; height: 60px; }
.tool svg { width: 40px; height: 40px; }
.tool svg.wide { width: 44px; }
.tool.split { width: 56px; }
.tool.toggled { width: 60px; background: #e6e6e6; color: #333; }
.tool.toggled + .toggled { margin-left: 4px; color: #222; }
.tool.dark { color: #333; }
.drop { width: 26px; height: 60px; }
.drop svg { width: 10px; height: 8px; }
.off { color: #b8b8b8; }
.tbox { width: 28px; height: 24px; border: 2px solid #666; border-radius: 2px; color: #666; font: 18px/20px "Liberation Serif", serif; text-align: center; flex: none; }
.tbox.big { width: 34px; height: 30px; border-color: #333; color: #333; font-size: 24px; line-height: 26px; }
.fit { position: relative; margin-left: 18px; }
.fit select { width: 168px; height: 46px; border: 2px solid #d4d4d4; border-radius: 3px; background: #f5f5f5; appearance: none; display: block; }
.fit svg { position: absolute; right: 12px; top: 20px; width: 14px; height: 8px; color: #ccc; }
.showme { margin-left: auto; gap: 11px; color: #000; }
.showme svg { width: 32px; height: 30px; }

.work { flex: 1; min-height: 0; display: flex; gap: 12px; padding-right: 12px; }
.data { width: 420px; flex: none; border-right: 2px solid #d0d0d0; background: #fff; display: flex; flex-direction: column; color: #000; }
.datatabs { display: flex; height: 58px; border-top: 2px solid #d0d0d0; }
.datatabs button { justify-content: space-between; padding: 0 16px 0 24px; flex: 1; background: #fafafa; border-left: 2px solid #d4d4d4; border-bottom: 2px solid #d4d4d4; }
.datatabs button.on { flex: none; width: 202px; padding-left: 36px; background: #fff; border: 0; }
.datatabs svg { width: 10px; height: 16px; }
.source { display: flex; align-items: center; gap: 10px; height: 58px; padding-left: 44px; border-bottom: 2px solid #e5e5e5; color: #333; }
.source svg { width: 30px; height: 32px; }
.pane { padding-bottom: 4px; }
.panehead { display: flex; align-items: center; height: 50px; padding-left: 36px; }
.dims .panehead { height: 56px; }
.meas { flex: 1; }
.meas, .params { border-top: 2px solid #e5e5e5; }
.panetools { margin-left: auto; display: flex; align-items: center; color: #666; gap: 16px; }
.panetools .listicon { width: 24px; height: 20px; }
.findicon { width: 20px; height: 20px; }
.panemenu { height: 36px; width: 44px; border-left: 2px solid #d4d4d4; margin-left: -4px; }
.menuicon { width: 14px; height: 9px; }
.pane li { position: relative; display: flex; align-items: center; height: 42px; padding-left: 36px; }
.pane li.nested { padding-left: 66px; }
.pane li.generated { font-style: italic; }
.chev { position: absolute; left: 15px; top: 16px; width: 14px; height: 10px; }
.ficon { position: relative; width: 44px; margin-right: 14px; display: flex; justify-content: center; align-items: center; font-size: 18px; font-style: normal; color: #38809f; }
.ficon.green { color: #43a781; }
.ficon svg { width: 24px; height: 24px; }
.eq { position: absolute; left: 0; top: 50%; width: 6px; height: 7px; margin-top: -3px; border: solid currentColor; border-width: 2px 0; }
.ficon.green .eq { left: 4px; }

.cards { width: 308px; flex: none; display: flex; flex-direction: column; gap: 12px; }
.card { background: #fafafa; border: 2px solid #d4d4d4; padding: 14px 12px 0; }
.pages { height: 124px; }
.filters { height: 156px; }
.marks { padding-bottom: 40px; }
.marktype { position: relative; margin-top: 24px; }
.marktype select { width: 100%; height: 42px; border: 2px solid #ccc; border-radius: 3px; background: #fafafa; appearance: none; padding: 0 0 0 58px; font: 20px/32px "Open Sans", "Noto Sans CJK SC", sans-serif; color: #333; display: block; }
.ring { position: absolute; left: 26px; top: 11px; width: 20px; height: 20px; }
.arrow { position: absolute; right: 2px; top: 2px; bottom: 2px; width: 36px; border-left: 2px solid #e0e0e0; display: flex; align-items: center; justify-content: center; color: #666; pointer-events: none; }
.arrow svg { width: 14px; height: 9px; }
.markbtns { display: grid; grid-template-columns: repeat(3, 1fr); gap: 12px; margin: 12px 0 18px; }
.markbtns button { flex-direction: column; height: 84px; border: 2px solid #d4d4d4; font-size: 18px; line-height: 24px; color: #000; gap: 12px; padding-top: 4px; white-space: nowrap; }
.markbtns svg, .slot svg { width: 34px; height: 28px; color: #666; }
.markbtns .tbox { margin: 2px 0; }
.markrow { display: flex; align-items: center; gap: 6px; margin-bottom: 6px; padding: 0 8px 0 10px; }
.slot { width: 34px; display: flex; justify-content: center; }
.pill { height: 40px; border-radius: 20px; background: #00b180; color: #fff; justify-content: flex-start; padding-left: 22px; gap: 14px; }
.markrow .pill { flex: 1; }
.pill.discrete { background: #4996b2; padding-left: 24px; }
.pill svg { width: 18px; height: 18px; }

.stage { flex: 1; min-width: 0; display: flex; flex-direction: column; gap: 12px; padding-bottom: 12px; }
.shelf { display: flex; align-items: center; height: 56px; border: 2px solid #d4d4d4; background: #fafafa; flex: none; }
.shelf h2 { display: flex; align-items: center; gap: 14px; width: 250px; height: 100%; padding-left: 12px; border-right: 2px solid #d4d4d4; }
.shelf h2 svg { width: 24px; height: 24px; }
.shelf .pill { width: 296px; margin-left: 4px; }
.lower { flex: 1; min-height: 0; display: flex; gap: 12px; }
.view { flex: 1; min-width: 0; border: 2px solid #b0b0b0; background: #fff; padding: 0 12px 12px 10px; display: flex; flex-direction: column; }
.view h2 { font-size: 40px; padding: 6px 0 0 10px; height: 88px; line-height: 88px; }
.map { position: relative; flex: 1; min-height: 0; border: 2px solid #e5e5e5; overflow: hidden; }
.canvas { width: 100%; height: 100%; }
.country { font-size: 26px; fill: #7c7c7c; stroke: #f4f4f4; stroke-width: 4px; paint-order: stroke; }
.city { font-size: 24px; fill: #000; text-anchor: middle; }
.controls { position: absolute; left: 18px; top: 18px; width: 56px; }
.box { width: 56px; border: 2px solid #b0b0b0; background: rgba(246, 246, 246, .88); }
button.box { height: 56px; color: #666; }
.find { width: 28px; height: 28px; }
.zoomer { margin-top: 18px; padding-top: 1px; height: 220px; display: flex; flex-direction: column; align-items: center; }
.zoomer button { width: 44px; height: 50px; flex: none; }
.zoomer button svg { width: 20px; height: 20px; }
.zoomer .pinned { height: 44px; margin-top: 3px; background: #e6e6e6; border: 2px solid #b0b0b0; color: #222; }
.zoomer .pinned svg { width: 40px; height: 40px; }
.zoomer .more { margin-top: 16px; }
.credit { position: absolute; left: 0; bottom: 4px; padding: 0 10px; font: 16px/24px "Liberation Sans", sans-serif; color: #666; background: rgba(255, 255, 255, .5); }

.legends { width: 308px; flex: none; display: flex; flex-direction: column; gap: 12px; }
.legend { border: 2px solid #d4d4d4; background: #fff; }
.legend h2 { height: 58px; line-height: 58px; padding-left: 12px; background: #fafafa; }
.ramp { margin: 7px 9px 0 7px; height: 32px; border: 2px solid #a9a294; background: linear-gradient(90deg, #b9ddf1, #9dc8e6 15%, #7dadd2 38%, #5f8db9 58%, #4a78aa 74%, #2a5783); }
.range { display: flex; justify-content: space-between; padding: 4px 10px 5px 9px; }
.legend li { display: flex; align-items: center; height: 40px; gap: 2px; padding-left: 6px; }
.legend li svg { width: 44px; height: 36px; }
.legend li span { width: 70px; text-align: right; }
.legend ul { padding-bottom: 2px; }

.sheets { display: flex; height: 62px; flex: none; background: #e5e5e5; border-top: 1px solid #c8c8c8; border-bottom: 2px solid #d4d4d4; }
.sheets button { padding: 0 12px; border-right: 2px solid #ccc; gap: 8px; white-space: pre; color: #555; }
.sheets .src { width: 262px; justify-content: flex-start; padding-left: 18px; gap: 10px; }
.sheets .dash { padding: 0 16px; }
.sheets svg { width: 24px; height: 24px; }
.sheets .dbi { width: 20px; }
.sheets .on { background: #fafafa; }
.sheets .add { width: 64px; color: #666; }
.sheets .add svg { width: 32px; height: 32px; }

.status { display: flex; align-items: center; height: 40px; flex: none; background: #ebebeb; font-size: 20px; color: #111; padding-left: 24px; white-space: pre; }
.st1, .st2 { margin-right: 32px; }
.cell { height: 40px; border-left: 2px solid #ccc; display: flex; align-items: center; }
.c1 { width: 254px; margin-left: auto; }
.c2 { width: 54px; }
.c3 { width: 94px; }
.nav { width: 142px; justify-content: center; gap: 18px; }
.nav svg { width: 14px; height: 14px; }
.modes { width: 153px; padding-left: 16px; gap: 20px; }
.modes svg { width: 22px; height: 22px; }
</style>
